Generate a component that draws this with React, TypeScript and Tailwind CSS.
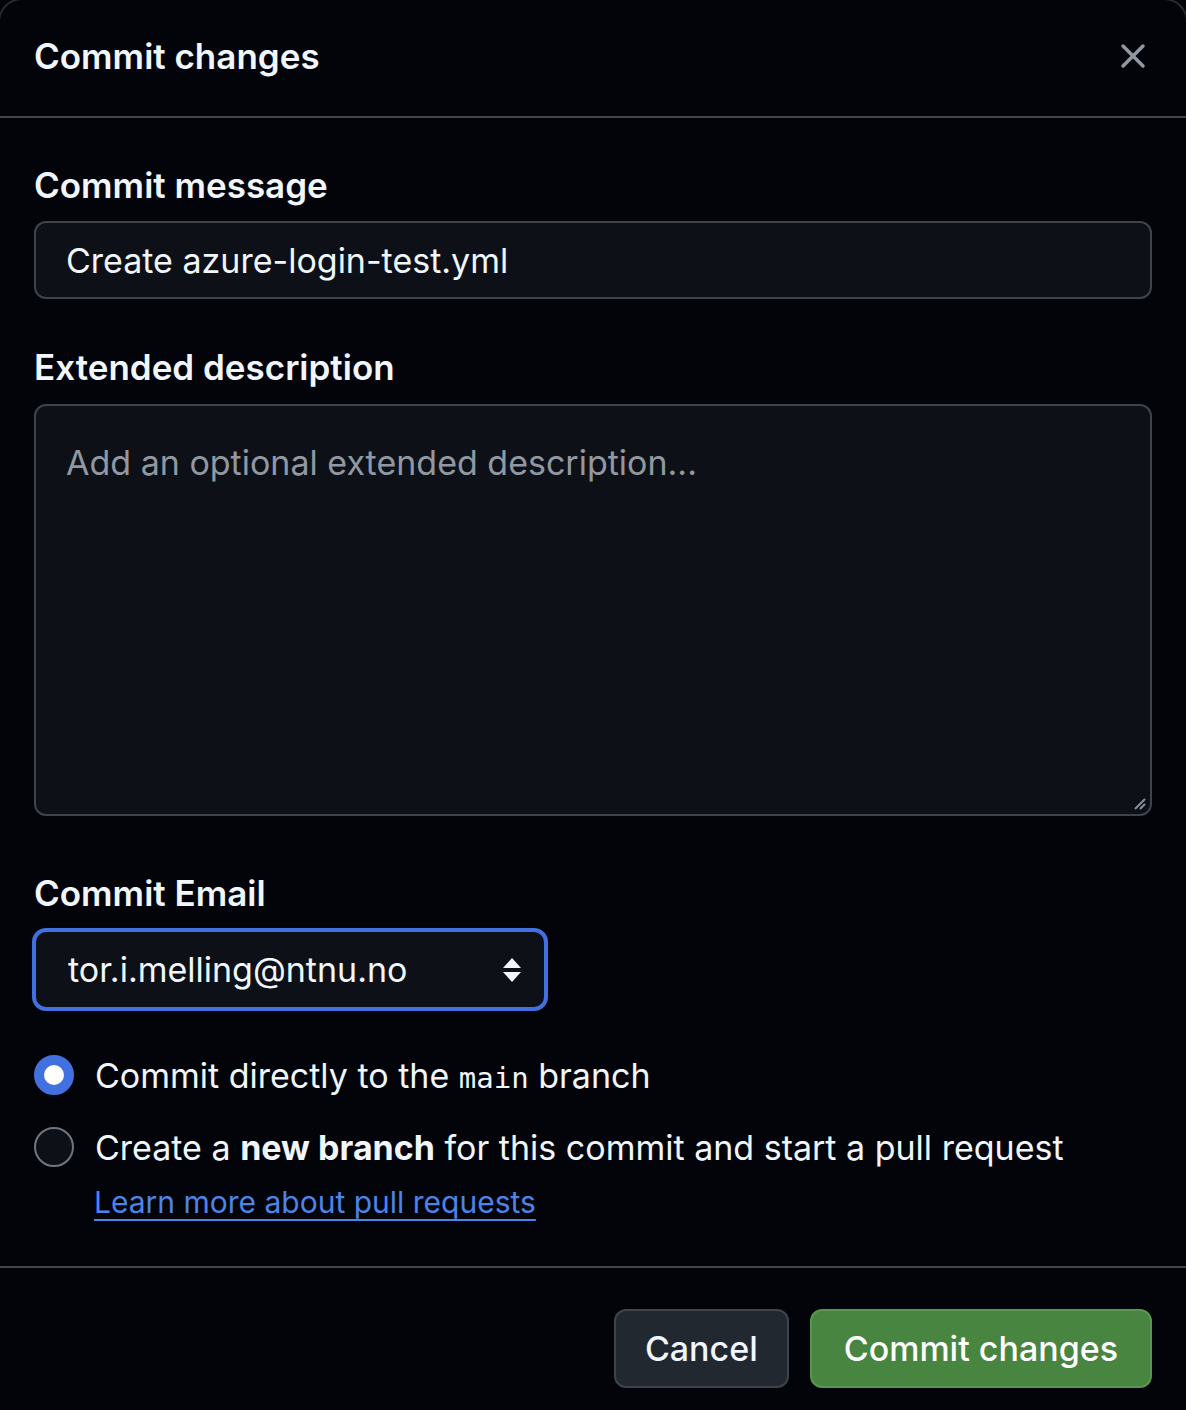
import { X } from "lucide-react";

const font = { fontFamily: "Inter, 'Noto Sans', 'Liberation Sans', sans-serif" };

function Radio({ checked }: { checked: boolean }) {
  return checked ? (
    <div className="w-[40px] h-[40px] shrink-0 rounded-full border-[10px] border-[#4270de] bg-white" />
  ) : (
    <div className="w-[40px] h-[40px] shrink-0 rounded-full border-2 border-[#6e7681] bg-[#0d1117]" />
  );
}

export default function App() {
  return (
    <div className="w-[1186px] h-[1410px] overflow-hidden bg-[#02040a] text-[#f0f6fc]" style={font}>
      <div className="-mx-[2px] -mt-[2px] h-[1420px] rounded-t-[24px] border-2 border-[#3d444d]/60 bg-[#02040a]">
        {/* Header */}
        <div className="h-[118px] flex items-center justify-between pl-[34px] pr-[33px] pb-[4px] border-b-2 border-[#3d444d]">
          <h1 className="text-[35px] leading-[40px] font-semibold">Commit changes</h1>
          <X className="w-[40px] h-[40px] text-[#9198a1]" strokeWidth={2.1} />
        </div>

        {/* Body */}
        <div className="px-[34px] pt-[47px] pb-[39px] border-b-2 border-[#3d444d]">
          <div className="text-[35px] leading-[40px] font-semibold mb-4">Commit message</div>
          <div className="h-[78px] rounded-[12px] border-2 border-[#3d444d] bg-[#0d1117] flex items-center pl-[30px] text-[34px]">
            Create azure-login-test.yml
          </div>

          <div className="text-[35px] leading-[40px] font-semibold mt-[48px] mb-[17px]">Extended description</div>
          <div className="relative h-[412px] rounded-[12px] border-2 border-[#3d444d] bg-[#0d1117] pl-[30px] pt-[33px] text-[34px] leading-[48px] text-[#9198a1]">
            Add an optional extended description...
            <svg className="absolute right-[4px] bottom-[4px]" width="14" height="14" viewBox="0 0 14 14">
              <path d="M13 3 L3 13" stroke="#8b929b" strokeWidth="2" />
              <path d="M13 8 L8 13" stroke="#8b929b" strokeWidth="2" />
            </svg>
          </div>

          <div className="text-[35px] leading-[40px] font-semibold mt-[57px] mb-[15px]">Commit Email</div>
          <div className="w-[516px] h-[83px] -ml-[2px] rounded-[14px] border-[4px] border-[#4270de] bg-[#0d1117] flex items-center justify-between pl-[32px] pr-[22px] text-[34px]">
            <span>tor.i.melling@ntnu.no</span>
            <svg width="20" height="26" viewBox="0 0 20 26">
              <path d="M10 1 L19 11 L1 11 Z" fill="#f0f6fc" />
              <path d="M10 25 L19 15 L1 15 Z" fill="#f0f6fc" />
            </svg>
          </div>

          <div className="mt-[40px] flex items-center gap-[21px] h-[48px]">
            <Radio checked />
            <span className="text-[34px]">
              Commit directly to the{" "}
              <code className="text-[29px]" style={{ fontFamily: "'DejaVu Sans Mono', 'Liberation Mono', monospace" }}>
                main
              </code>{" "}
              branch
            </span>
          </div>

          <div className="mt-[24px] flex items-center gap-[21px] h-[48px]">
            <Radio checked={false} />
            <span className="text-[34px]">
              Create a <span className="font-bold">new branch</span> for this commit and start a pull request
            </span>
          </div>
          <div className="pl-[60px] mt-[11px] leading-[40px]">
            <a href="#" className="text-[30px] text-[#4d84e8] underline underline-offset-[6px] decoration-2">
              Learn more about pull requests
            </a>
          </div>
        </div>

        {/* Footer */}
        <div className="flex justify-end gap-[21px] px-[34px] pt-[41px]">
          <button className="h-[79px] px-[29px] rounded-[12px] border-2 border-[#3d444d] bg-[#212830] text-[34px] font-medium text-[#f0f6fc]">
            Cancel
          </button>
          <button className="h-[79px] px-[32px] rounded-[12px] border-2 border-[#5a9650] bg-[#478540] text-[34px] font-medium text-white">
            Commit changes
          </button>
        </div>
      </div>
    </div>
  );
}
